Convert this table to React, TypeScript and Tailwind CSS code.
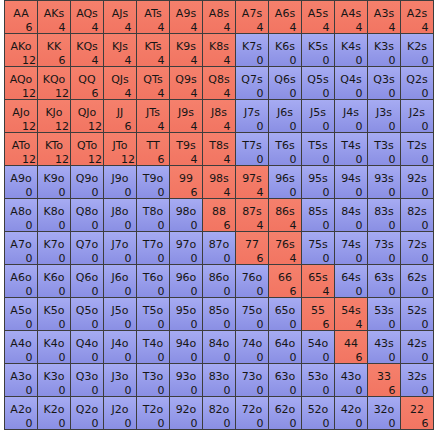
import React from "react";

const ranks = ["A", "K", "Q", "J", "T", "9", "8", "7", "6", "5", "4", "3", "2"];

// hands played from this spot, everything else folds
const suitedIn = [
  "AK", "AQ", "AJ", "AT", "A9", "A8", "A7", "A6", "A5", "A4", "A3", "A2",
  "KQ", "KJ", "KT", "K9", "K8",
  "QJ", "QT", "Q9", "Q8",
  "JT", "J9", "J8",
  "T9", "T8",
  "98", "97",
  "87", "86",
  "76",
  "65",
  "54",
];
const offsuitIn = ["AK", "AQ", "KQ", "AJ", "KJ", "QJ", "AT", "KT", "QT", "JT"];

type Hand = { label: string; combos: number; on: boolean };

const handAt = (row: number, col: number): Hand => {
  if (row === col) {
    return { label: ranks[row] + ranks[col], combos: 6, on: true };
  }
  if (col > row) {
    const key = ranks[row] + ranks[col];
    const on = suitedIn.includes(key);
    return { label: key + "s", combos: on ? 4 : 0, on };
  }
  const key = ranks[col] + ranks[row];
  const on = offsuitIn.includes(key);
  return { label: key + "o", combos: on ? 12 : 0, on };
};

const Cell = ({ hand }: { hand: Hand }) => (
  <div
    className={
      "flex flex-col pt-[6px] leading-[14px] text-[11px] text-[#161616] " +
      (hand.on
        ? "bg-gradient-to-b from-[#f5806c] to-[#f27562]"
        : "bg-gradient-to-b from-[#a6abf2] to-[#8a8fe4]")
    }
  >
    <span className="text-center">{hand.label}</span>
    <span className="pl-[16px] text-center">{hand.combos}</span>
  </div>
);

export default function App() {
  return (
    <div className="w-[438px] h-[436px] bg-white" style={{ fontFamily: "'DejaVu Sans', Tahoma, sans-serif" }}>
      <div className="mx-auto w-[430px] grid grid-cols-[repeat(13,32px)] grid-rows-[repeat(13,32px)] gap-px p-px bg-[#3d3d3d]">
        {ranks.map((_, row) =>
          ranks.map((_, col) => <Cell key={row + "-" + col} hand={handAt(row, col)} />)
        )}
      </div>
    </div>
  );
}
